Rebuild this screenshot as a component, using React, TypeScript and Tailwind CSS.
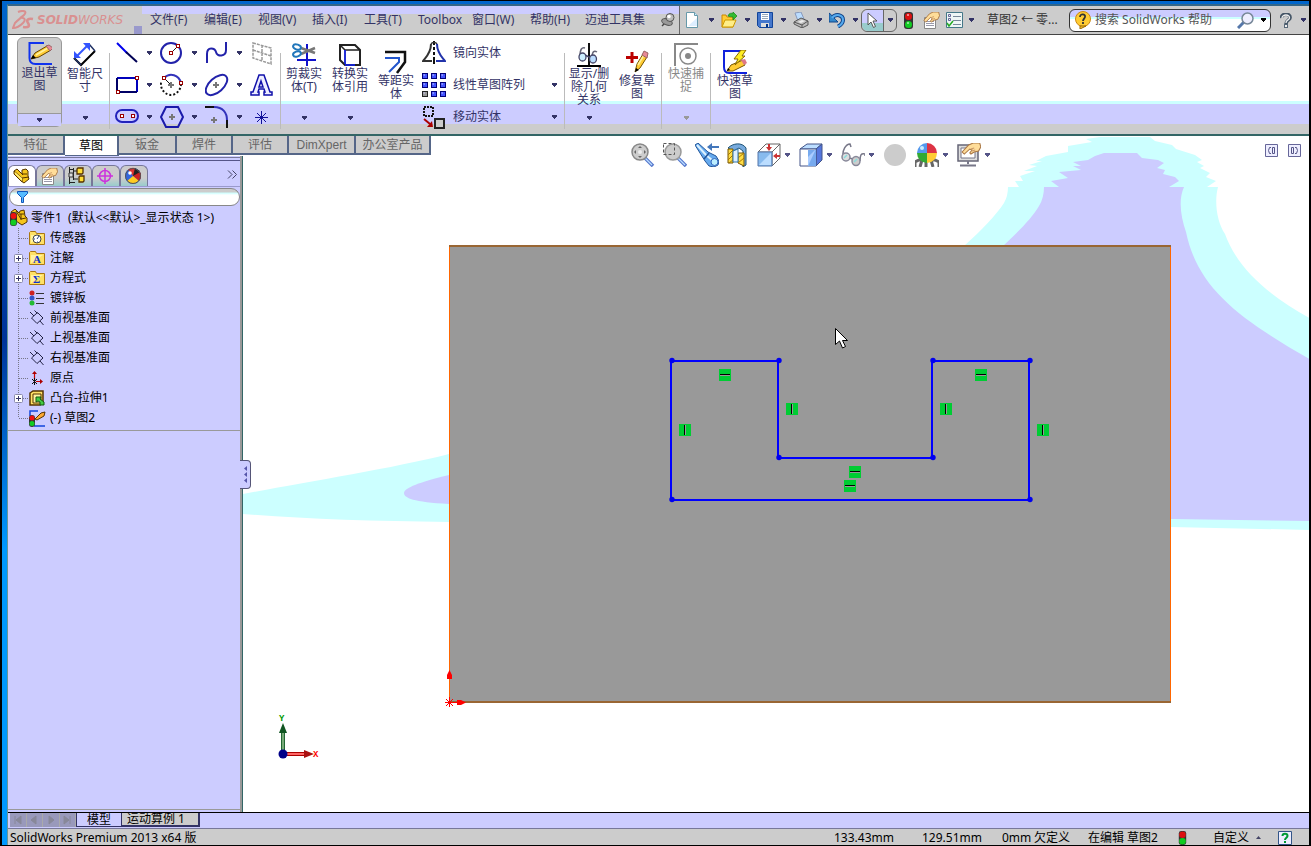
import React from 'react'

type IconProps = { w?: number; h?: number; box?: string; children: React.ReactNode }

function Ic({ w = 24, h = 24, box, children }: IconProps) {
  return (
    <svg width={w} height={h} viewBox={box ?? `0 0 ${w} ${h}`} fill="none" className="shrink-0" aria-hidden="true">
      {children}
    </svg>
  )
}

function Arrow({ color = '#333366' }: { color?: string }) {
  return (
    <Ic w={5} h={4}>
      <path d="M0 0h5v2h-1v1h-1v1h-1v-1h-1v-1h-1z" fill={color} />
    </Ic>
  )
}

/* ---------- shared pieces ---------- */

function Handle({ x, y }: { x: number; y: number }) {
  return <rect x={x + 0.5} y={y + 0.5} width="3" height="3" fill="#fff" stroke="#990000" />
}

function Plus({ x, y }: { x: number; y: number }) {
  return <path d={`M${x - 3} ${y}h6M${x} ${y - 3}v6`} stroke="#777" strokeWidth="2" />
}

function Pencil() {
  return (
    <g>
      <path d="M1 15l4-6L17 2l4 4L9 13z" fill="#ffcc33" stroke="#664400" />
      <path d="M6 11L18 4" stroke="#fff09a" strokeWidth="1.500" />
      <path d="M16 2l3-1 4 3-3 3z" fill="#e88a96" stroke="#996666" />
      <path d="M1 15l2-4 3 3z" fill="#000" />
    </g>
  )
}

function Hand() {
  return (
    <g>
      <path d="M1 9L7 2l4-2h6l1 4-2 4-4 1-3 2-1-1 2-3-2-1-5 5z" fill="#ffdd99" stroke="#aa7744" />
      <path d="M9 6l3-1M10 8l3-1" stroke="#cc9966" />
    </g>
  )
}

function Stoplight() {
  return (
    <Ic w={9} h={17}>
      <rect x="0" y="0" width="9" height="17" rx="3" fill="#333" />
      <circle cx="4.500" cy="4.500" r="3.500" fill="#dd1111" />
      <circle cx="4.500" cy="12.500" r="3.500" fill="#11cc22" />
      <path d="M3 3h2M3 11h2" stroke="#fff" />
    </Ic>
  )
}

/* ---------- title bar icons ---------- */

const NewDoc = () => (
  <Ic w={16} h={16}>
    <path d="M1.500.5h8l3 3v12h-11z" fill="#fff" stroke="#6699aa" />
    <path d="M9.500.5v3h3" fill="#cceeff" stroke="#6699aa" />
    <path d="M3 14L12 6v8z" fill="#ddeeff" />
  </Ic>
)
const OpenDoc = () => (
  <Ic w={16} h={16}>
    <path d="M1 15V3h4l1 2h6v10z" fill="#ffcc33" stroke="#cc8800" />
    <path d="M1 15l3-7h11l-3 7z" fill="#ffee88" stroke="#cc9900" />
    <path d="M7 4c1-3 3-3 5-2.500V0l4 4-4 4V5c-2-.5-3 0-5-1z" fill="#33bb33" stroke="#118811" strokeWidth=".7" />
  </Ic>
)
const SaveDoc = () => (
  <Ic w={16} h={16}>
    <path d="M.5.5h15v15h-13l-2-2z" fill="#4477cc" stroke="#114499" />
    <path d="M4 1h8v7H4z" fill="#fff" />
    <path d="M5 2.500h6M5 4.500h6M5 6.500h6" stroke="#99aabb" />
    <path d="M4 11h8v4H4z" fill="#ddd" />
    <path d="M9 12h2v3H9z" fill="#003388" />
  </Ic>
)
const PrintDoc = () => (
  <Ic w={16} h={16}>
    <path d="M2 1l6-1 3 7-6 2z" fill="#bbddff" stroke="#8899bb" />
    <path d="M1 10l7-4 7 3v4l-6 3-8-4z" fill="#bbb" stroke="#555" />
    <path d="M1 10l8 3 6-4" stroke="#555" />
    <path d="M9 13v3" stroke="#555" />
    <path d="M5 10l4-2 3 1-4 2z" fill="#eee" />
  </Ic>
)
const Undo = () => (
  <Ic w={16} h={16}>
    <path d="M3 6c4-5 11-3 11 2 0 3-2 5-5 6.500" stroke="#114488" strokeWidth="4" />
    <path d="M0 1v9h9L6.500 7.500 2.500 3z" fill="#3388cc" stroke="#114488" />
    <path d="M3 6c4-5 11-3 11 2 0 3-2 5-5 6.500" stroke="#55aaee" strokeWidth="2" />
  </Ic>
)
const Pointer = () => (
  <Ic w={12} h={17}>
    <path d="M1 1v12l3-3 2.500 5.500 2-1L6 9h4z" fill="#fff" stroke="#555" />
  </Ic>
)
const PropsIcon = () => (
  <Ic w={17} h={17}>
    <path d="M1.500 5.500h11v11h-11z" fill="#fff" stroke="#888" />
    <path d="M3 9.500h8M3 11.500h8M3 13.500h8" stroke="#99a" />
    <g transform="translate(0 0) scale(.92)"><Hand /></g>
  </Ic>
)
const ListIcon = () => (
  <Ic w={17} h={16}>
    <path d="M.5.500h16v15h-16z" fill="#eef6f6" stroke="#447788" />
    <path d="M7 4.500h8M7 8.500h8M7 12.500h8" stroke="#778899" />
    <path d="M2.500 2.500h2v2h-2zM2.500 6.500h2v2h-2z" stroke="#666699" />
    <path d="M1 11l2 3 4-5" stroke="#22aa22" strokeWidth="1.500" />
  </Ic>
)
const Pin = () => (
  <Ic w={14} h={14}>
    <path d="M1 13l4-4" stroke="#444" strokeWidth="1.500" />
    <ellipse cx="6" cy="9" rx="5.500" ry="3" transform="rotate(20 6 9)" fill="#999" stroke="#555" />
    <circle cx="9" cy="4.500" r="4" fill="#bbb" stroke="#555" />
    <circle cx="8" cy="3.500" r="1.800" fill="#fff" />
  </Ic>
)

/* ---------- ribbon icons ---------- */

const ExitSketch = () => (
  <Ic>
    <path d="M16 1H1.500v15c0 4 2 6 6 6H24" stroke="#1133ee" strokeWidth="2" />
    <g transform="translate(2 2)"><Pencil /></g>
  </Ic>
)
const SmartDim = () => (
  <Ic>
    <path d="M1 15l7 7L22 8" stroke="#000" strokeWidth="2" />
    <path d="M1 15l7 7M16 1l6 7" stroke="#223366" strokeWidth="1.500" />
    <path d="M4 13L15 2" stroke="#3355ff" strokeWidth="2" />
    <path d="M1 15V8l7 7zM17 0v8L10 0z" fill="#3355ff" />
  </Ic>
)
const LineI = () => <Ic><path d="M2 2l10 10" stroke="#0000ee" strokeWidth="2" /><path d="M11 11l11 10" stroke="#000055" strokeWidth="2" /></Ic>
const CircleI = () => (
  <Ic>
    <circle cx="11" cy="12" r="10" stroke="#2222aa" strokeWidth="2" />
    <path d="M11 12l7-7" stroke="#222" />
    <Handle x={9} y={10} /><Handle x={16} y={3} />
  </Ic>
)
const SplineI = () => <Ic><path d="M2 22V13c0-8 8-6 9-2 1 5 10 5 10-2V1" stroke="#2222aa" strokeWidth="2" /></Ic>
const GridI = () => (
  <Ic>
    <path d="M3 2l18 5v16L3 17zM3 9l18 6M12 4v16" stroke="#999" strokeWidth="1.500" strokeDasharray="3 1" />
  </Ic>
)
const RectI = () => (
  <Ic>
    <path d="M2 5h20v14" stroke="#0000bb" strokeWidth="2" />
    <path d="M2 5v14h20" stroke="#000066" strokeWidth="2" />
    <Handle x={1} y={17} /><Handle x={20} y={3} />
  </Ic>
)
const ArcI = () => (
  <Ic>
    <path d="M4 5c6-6 15-3 17 5" stroke="#3333bb" strokeWidth="2" />
    <path d="M21 11c0 6-5 11-10 11S0 17 1 9" stroke="#111" strokeWidth="2" strokeDasharray="2 2" />
    <path d="M4 5l7 7" stroke="#111" />
    <Plus x={11} y={12} /><Handle x={2} y={3} /><Handle x={19} y={8} />
  </Ic>
)
const EllipseI = () => (
  <Ic>
    <ellipse cx="11.500" cy="12" rx="13" ry="7" transform="rotate(-42 11.500 12)" stroke="#2222aa" strokeWidth="2" />
    <Plus x={11} y={12} />
  </Ic>
)
const TextI = () => (
  <Ic>
    <path d="M9 2h5l6 17h2v3h-8v-3h1l-1-3H9l-1 3h1v3H1v-3h2zM11 8l-2 6h4z" fill="#eef" stroke="#1111aa" strokeWidth="1.500" fillRule="evenodd" />
  </Ic>
)
const SlotI = () => (
  <Ic>
    <rect x="1" y="5" width="22" height="12" rx="6" stroke="#2222bb" strokeWidth="2" />
    <Handle x={5} y={9} /><Handle x={16} y={9} />
  </Ic>
)
const HexI = () => (
  <Ic>
    <path d="M6 2h12l5 10-5 10H6L1 12z" stroke="#1a1aaa" strokeWidth="2" />
    <Plus x={12} y={12} />
  </Ic>
)
const FilletI = () => (
  <Ic>
    <path d="M0 2h9M22 15v8" stroke="#111" strokeWidth="2" />
    <path d="M9 2c9 0 13 6 13 13" stroke="#3333bb" strokeWidth="2" />
    <Plus x={9} y={15} />
  </Ic>
)
const PointI = () => <Ic><path d="M11.500 6v13M5 12.500h13M7 8l9 9M16 8l-9 9" stroke="#111199" /></Ic>

const TrimI = () => (
  <Ic>
    <path d="M15 1v22M5 17h19" stroke="#1111cc" strokeWidth="2" />
    <path d="M9 5l14 5M9 11l14-6" stroke="#777" strokeWidth="2.500" />
    <ellipse cx="5" cy="4" rx="4" ry="2.500" transform="rotate(20 5 4)" stroke="#2277bb" strokeWidth="2" />
    <ellipse cx="5" cy="11" rx="4" ry="2.500" transform="rotate(-20 5 11)" stroke="#2277bb" strokeWidth="2" />
  </Ic>
)
const ConvertI = () => (
  <Ic>
    <path d="M2 2h15l5 5v15H7l-5-5z" fill="#fff" stroke="#222" strokeWidth="2" />
    <path d="M2 2l5 5h15M7 7v15" stroke="#222" strokeWidth="1.500" />
    <path d="M7 21V7M7 22h10" stroke="#1122ff" strokeWidth="1.500" />
  </Ic>
)
const OffsetI = () => (
  <Ic>
    <path d="M1 2h20v10L13 23" stroke="#111" strokeWidth="2.500" />
    <path d="M1 8h14v4L5 22" stroke="#2255cc" strokeWidth="2" />
  </Ic>
)
const MirrorI = () => (
  <Ic>
    <path d="M12 0v4m0 2v3m0 2v3m0 2v7" stroke="#111" strokeWidth="2" />
    <path d="M9 3c0 9-5 13-8 17h9" stroke="#333" strokeWidth="2" />
    <path d="M9 3c1-2 5-2 6 0" stroke="#333" strokeWidth="1.500" />
    <path d="M15 3c0 9 5 13 8 17h-9" stroke="#2233aa" strokeWidth="2" />
  </Ic>
)
const PatternI = () => (
  <Ic>
    {[1, 10, 19].map((y) =>
      [0, 9, 18].map((x) => (
        <g key={`${x}-${y}`}>
          <rect x={x + 0.5} y={y - 0.5} width="5" height="5" fill={x === 0 && y === 19 ? '#999' : '#4455ff'} stroke={x === 0 && y === 19 ? '#222' : '#000077'} />
          <path d={`M${x + 1.5} ${y + 1}h1.500`} stroke="#ccf" />
        </g>
      )),
    )}
  </Ic>
)
const MoveI = () => (
  <Ic>
    <path d="M2 2h9v9H2z" stroke="#111" strokeWidth="2" strokeDasharray="2 1" />
    <path d="M2 14l6 5" stroke="#aa0000" strokeWidth="2" />
    <path d="M11 22H5l5-6z" fill="#aa0000" />
    <path d="M13 14h9v9h-9z" fill="#ccc" stroke="#222" strokeWidth="2" />
  </Ic>
)
const RelationsI = () => (
  <Ic>
    <path d="M12 0v23" stroke="#111" strokeWidth="2" />
    <path d="M0 23h24" stroke="#000" strokeWidth="2" />
    <path d="M3 13C3 6 5 4 8 5M15 14c0-5 2-7 5-5" stroke="#667" strokeWidth="1.500" />
    <path d="M8 12l4 2 3 1" stroke="#446" strokeWidth="1.500" />
    <ellipse cx="5.500" cy="14" rx="3.500" ry="4" fill="#cceeff" stroke="#446" strokeWidth="1.300" />
    <ellipse cx="16" cy="16" rx="3.500" ry="4" fill="#bbddff" stroke="#446" strokeWidth="1.300" />
  </Ic>
)
const RepairI = () => (
  <Ic>
    <path d="M7 2v11M1 7.500h12" stroke="#bb0000" strokeWidth="3" />
    <path d="M10 22l2-8 6-10 4 3-7 11z" fill="#ffcc33" stroke="#775500" />
    <path d="M13 15l6-10" stroke="#fff09a" strokeWidth="1.500" />
    <path d="M17 5l2-4 4 2-1 5z" fill="#e88a96" stroke="#996666" />
    <path d="M10 22l1-4 3 2z" fill="#000" />
  </Ic>
)
const SnapI = () => (
  <Ic>
    <path d="M1 23V1H24" stroke="#888" strokeWidth="2" />
    <circle cx="14" cy="13" r="8" stroke="#888" strokeWidth="1.500" />
    <circle cx="14" cy="13" r="3" fill="#888" />
  </Ic>
)
const RapidI = () => (
  <Ic>
    <path d="M18 1H1v16c0 4 1 6 5 6H24" stroke="#1122dd" strokeWidth="2" />
    <path d="M4 21l4-6 12-5 2 5-12 6z" fill="#ffcc33" stroke="#775500" />
    <path d="M18 10l4-1 2 4-3 2z" fill="#dd7788" />
    <path d="M18 0l5 0-4 6h3L12 15l3-6h-4z" fill="#ffee22" stroke="#886600" />
    <path d="M4 21l1-3 2 2z" fill="#000" />
  </Ic>
)

/* ---------- view toolbar icons ---------- */

const ZoomFit = () => (
  <Ic>
    <path d="M14 15l8 8" stroke="#5577cc" strokeWidth="3.500" /><path d="M14 15l7 7" stroke="#bbddff" strokeWidth="1.200" />
    <circle cx="9" cy="9" r="8" fill="#ccc" stroke="#888" strokeWidth="1.500" />
    <path d="M9 3l2 2H7zM9 15l2-2H7zM3 9l2-2v4zM15 9l-2-2v4z" fill="#666" />
    <circle cx="9" cy="9" r="2" fill="#eee" />
  </Ic>
)
const ZoomArea = () => (
  <Ic>
    <path d="M15 15l8 8" stroke="#5577cc" strokeWidth="3.500" /><path d="M15 15l7 7" stroke="#bbddff" strokeWidth="1.200" />
    <circle cx="10" cy="9" r="8" fill="#ccc" stroke="#999" strokeWidth="1.500" />
    <path d="M.5.500h11v11H.5z" stroke="#555" strokeDasharray="3 2" />
  </Ic>
)
const PrevView = () => (
  <Ic>
    <path d="M0 2l3-2 10 9 8 4 3 5-1 4-4 2-5-1-4-5L5 10z" fill="#66aaee" stroke="#225599" />
    <path d="M2 2l9 10 6 5" stroke="#ddf2ff" strokeWidth="2" />
    <path d="M9 16l5-6" stroke="#225599" strokeWidth="1.500" />
    <circle cx="19.500" cy="19" r="3.500" fill="#bbeeff" stroke="#3366bb" />
    <path d="M15 4h9" stroke="#4477bb" strokeWidth="2" /><path d="M12 4l5-4v8z" fill="#4477bb" />
  </Ic>
)
const SectionI = () => (
  <Ic w={22}>
    <path d="M1 5c5-5 14-6 18 0v17l-3 2V8l-4-3-6 3z" fill="#77aadd" stroke="#225577" />
    <path d="M1 6h5v14H1zM11 10h6v13l-6-3z" fill="#ffdd44" stroke="#775500" />
    <path d="M1 12l5-5M1 17l5-5M2 20l4-3M11 15l6-5M11 20l6-5" stroke="#aa7700" />
    <path d="M6 8l5-2v13H6z" fill="#ddefff" stroke="#3377aa" />
  </Ic>
)
const OrientI = () => (
  <Ic>
    <path d="M1 9l8-8h14l-8 8zM23 1v14l-8 8V9z" fill="#fff" stroke="#666" />
    <path d="M1 9h14v14H1z" fill="#88bbee" stroke="#5577aa" />
    <path d="M2 22L14 10v12z" fill="#bbddff" />
    <path d="M12 1v3M23 13h-3" stroke="#cc3333" strokeWidth="2" /><path d="M9 4h6l-3 4zM20 10v6l-4-3z" fill="#cc3333" />
  </Ic>
)
const DisplayI = () => (
  <Ic>
    <path d="M1 6l7-5h15l-6 5z" fill="#bbddff" stroke="#445588" />
    <path d="M17 6l6-5v16l-6 6z" fill="#5577dd" stroke="#445588" />
    <path d="M1 6h16v17H1z" fill="#fff" stroke="#445588" />
    <path d="M9 7h8v16H9z" fill="#77aaee" /><path d="M9 23V14l8-8z" fill="#aaccff" />
  </Ic>
)
const GlassesI = () => (
  <Ic>
    <path d="M2 14C1 7 5 1 9 1l1 3M19 18c0-6 1-8 5-7v2M8 15l4 1" stroke="#777788" strokeWidth="1.500" />
    <ellipse cx="5" cy="14" rx="4" ry="4" fill="#ddd" stroke="#889" strokeWidth="1.500" />
    <ellipse cx="15" cy="18" rx="4" ry="4.500" fill="#ccc" stroke="#889" strokeWidth="1.500" />
    <path d="M3 15l3-3M13 19l3-3" stroke="#88dddd" strokeWidth="1.500" />
  </Ic>
)
const BallI = () => <Ic><circle cx="12" cy="12" r="11" fill="#ccc" /></Ic>
const SceneI = () => (
  <Ic>
    <path d="M0 24v-5l4-2h16l4 2v5M5 24l2-7M11 24v-7M18 24l-2-7" stroke="#666" strokeWidth="3" />
    <path d="M12 10V0a10 10 0 0 0-10 10z" fill="#5599ee" />
    <path d="M12 10V0a10 10 0 0 1 10 10z" fill="#dd3344" />
    <path d="M12 10v10A10 10 0 0 1 2 10z" fill="#33aa33" />
    <path d="M12 10v10a10 10 0 0 0 10-10z" fill="#ffcc33" />
    <circle cx="7" cy="5" r="2" fill="#cceeff" />
  </Ic>
)
const SettingsI = () => (
  <Ic>
    <path d="M1 2h20v16H1z" fill="#ddd" stroke="#667" strokeWidth="1.500" />
    <path d="M4 5h14v10H4z" fill="#fff" stroke="#778" />
    <path d="M11 18v3M3 22.500h16" stroke="#778" strokeWidth="2" />
    <g transform="translate(4 0) scale(1.100 1)"><Hand /></g>
  </Ic>
)

/* ---------- tree icons ---------- */

const PartI = () => (
  <Ic w={17} h={17}>
    <path d="M1 3l3-2 5 5 0-4 4-1 2 2v5l1 3-5 4-3-2L1 6z" fill="#f5c51c" stroke="#553300" />
    <path d="M1 3l8 7 7-1M9 10v4M9 6h5M4 1l6 6" stroke="#553300" />
    <path d="M2 4l7 6v3L2 6z" fill="#ffee77" />
  </Ic>
)
const RootI = () => (
  <Ic w={18} h={18}>
    <path d="M1 3l4-3 4 4 1-2 4-1 1 6 2 2v4l-5 3-6-4z" fill="#f5c51c" stroke="#553300" />
    <path d="M6 2l5 8 5-1M11 5v6M9 5h5" stroke="#553300" />
    <rect x="0" y="3" width="7" height="14" rx="3" fill="#333" />
    <circle cx="3.500" cy="7" r="3" fill="#ee1111" /><circle cx="3.500" cy="13.500" r="3" fill="#11cc22" />
  </Ic>
)
function Folder({ children }: { children: React.ReactNode }) {
  return (
    <Ic w={16} h={16}>
      <path d="M.5 14.500V2.500l1-1h5l1 2h8v11z" fill="#ffe066" stroke="#aa7711" />
      <path d="M2 13V5h12z" fill="#fff3a0" />
      {children}
    </Ic>
  )
}
const SensorI = () => (
  <Folder><circle cx="8" cy="9" r="4" fill="#fff" stroke="#444" /><path d="M8 9l2-3M5 9h1M8 12h1" stroke="#224488" /></Folder>
)
const AnnoI = () => <Folder><text x="4" y="13" fontSize="11" fontWeight="bold" fontFamily="Liberation Serif, serif" fill="#1133cc">A</text></Folder>
const EquI = () => <Folder><text x="4" y="13" fontSize="11" fontWeight="bold" fontFamily="Liberation Serif, serif" fill="#1133cc">Σ</text></Folder>
const MaterialI = () => (
  <Ic w={16} h={16}>
    <circle cx="3" cy="3" r="2.500" fill="#cc2222" /><circle cx="3" cy="8" r="2.500" fill="#3355cc" /><circle cx="3" cy="13" r="2.500" fill="#22bb33" />
    <path d="M7 3.500h8M7 8.500h8M7 13.500h8" stroke="#333" />
  </Ic>
)
const PlaneI = () => (
  <Ic w={16} h={16}>
    <path d="M8 2.500L14 8.500 8 13.500 2.500 8.500zM1 1l4 4M11 11l4 4M0 8l3-3 7-5M0 5.500l1 1" stroke="none" />
    <path d="M8.500 2.500L14 8 8 13.500 2.500 8zM1 2l4 4M11 11l3.500 4M5.500.5l3 3" stroke="#222244" />
  </Ic>
)
const OriginI = () => (
  <Ic w={16} h={16}>
    <path d="M5.500 12V2M7 11.500h6" stroke="#cc0000" strokeWidth="1.200" />
    <path d="M3 4l2.500-3L8 4zM11 9l3 2.500-3 2.500z" fill="#aa0000" />
    <path d="M3 9l5 5M8 9l-5 5M5.500 8v7" stroke="#111" />
  </Ic>
)
const ExtrudeI = () => (
  <Ic w={16} h={16}>
    <path d="M1 3l3-2h10v11l-3 3H1z" fill="#ffe066" stroke="#553300" strokeWidth="1.500" />
    <path d="M4 4h8v9H4z" fill="#fff3a0" stroke="#553300" />
    <path d="M7 7h5l-1 2 4 3v3h-4v-3l-2-1-2 1z" fill="#44cc44" stroke="#115511" />
  </Ic>
)
const SketchI = () => (
  <Ic w={17} h={17}>
    <path d="M9 1H1v5M5 16h11" stroke="#1144dd" strokeWidth="1.500" />
    <path d="M6 9l6-6 4-1-1 4-7 4z" fill="#ffaa33" stroke="#553300" />
    <rect x="0" y="5" width="6" height="12" rx="3" fill="#333" />
    <circle cx="3" cy="8" r="2.500" fill="#ee1111" /><circle cx="3" cy="13.500" r="2.500" fill="#11cc22" />
  </Ic>
)
const ConfigI = () => (
  <Ic w={18} h={18}>
    <path d="M1.500 0v17M1 2.500h4M1 15.500h6M5.500 1v12M6 4h4M6 12h4" stroke="#222" />
    <path d="M9 2l1-1h5v5l-1 1H9zM11 10l1-1h4v5l-1 1h-4z" fill="#ffdd33" stroke="#553300" strokeWidth="1.300" />
    <path d="M1 6h4v4H1z" fill="#ddd" stroke="#333" />
  </Ic>
)
const DimXI = () => (
  <Ic w={18} h={18}>
    <circle cx="9" cy="9" r="5.500" stroke="#cc33dd" strokeWidth="1.500" />
    <path d="M9 1v16M1 9h16" stroke="#cc33dd" strokeWidth="1.500" />
  </Ic>
)
const AppearI = () => (
  <Ic w={18} h={18}>
    <circle cx="9" cy="9" r="8" fill="#3366dd" />
    <path d="M9 9V1a8 8 0 0 1 8 8z" fill="#222" /><path d="M9 9L4 2.500A8 8 0 0 1 11 1z" fill="#dd3333" />
    <path d="M9 9l7-4a8 8 0 0 1-1 9z" fill="#cc2222" /><path d="M9 9l6 5a8 8 0 0 1-12 0z" fill="#ffcc22" />
    <circle cx="6" cy="6" r="1.800" fill="#fff" />
    <circle cx="9" cy="9" r="7.500" stroke="#555" />
  </Ic>
)

/* ---------- title bar ---------- */

const menus: [string, string][] = [
  ['文件(F)', 'w-[54px]'], ['编辑(E)', 'w-[54px]'], ['视图(V)', 'w-[54px]'], ['插入(I)', 'w-[52px]'], ['工具(T)', 'w-[54px]'],
  ['Toolbox', 'w-[54px]'], ['窗口(W)', 'w-[58px]'], ['帮助(H)', 'w-[55px]'], ['迈迪工具集', 'w-[76px]'],
]

const quick: [string, () => React.ReactElement][] = [
  ['新建', NewDoc], ['打开', OpenDoc], ['保存', SaveDoc], ['打印', PrintDoc], ['撤消', Undo],
]

function TitleBar() {
  return (
    <header className="flex h-[29px] shrink-0 items-stretch border-b border-[#444] bg-[#ccc]">
      <div className="flex w-[134px] shrink-0 items-center gap-[3px] pl-1 text-[#d99090]">
        <Ic w={22} h={20}>
          <path d="M6 2c5-2 10-1 6 3L8 8c5-1 6 2 3 5s-6 5-10 5l2-5c4-4 6-5 9-8" stroke="currentColor" strokeWidth="2" />
          <path d="M21 9c-5-1-7 1-5 4s1 5-5 4" stroke="currentColor" strokeWidth="2.500" />
        </Ic>
        <span className="flex-1 whitespace-nowrap text-[12px] italic [font-family:'DejaVu_Sans',sans-serif]">
          <b>SOLID</b>WORKS
        </span>
        <i className="h-2 w-2 self-end bg-[#9999cc]" />
      </div>
      <nav className="flex shrink-0 items-center border-r border-[#666] bg-[linear-gradient(#ccccff_8px,#cccccc_8px)] pl-2">
        {menus.map(([label, width]) => (
          <button key={label} className={`${width} whitespace-nowrap text-left text-[#333366]`}>{label}</button>
        ))}
        <button aria-label="固定菜单" className="w-[18px]"><Pin /></button>
      </nav>
      <div className="flex min-w-0 flex-1 items-center pl-[5px]">
        {quick.map(([label, Icon]) => (
          <button key={label} aria-label={label} className={`flex shrink-0 items-center gap-2 ${label === '撤消' ? 'w-8' : 'w-9'}`}><Icon /><Arrow /></button>
        ))}
        <button aria-label="选择" className="mr-[7px] flex h-[23px] w-9 shrink-0 items-center rounded-md border border-[#666] bg-[#ccc]">
          <span className="flex h-full w-[22px] items-center justify-center rounded-l-md border-r border-[#666] bg-[linear-gradient(#ccccff_60%,#99cccc_60%)]"><Pointer /></span>
          <span className="flex flex-1 justify-center"><Arrow /></span>
        </button>
        <button aria-label="重建模型" className="mr-[10px]"><Stoplight /></button>
        <button aria-label="文件属性" className="mr-[6px]"><PropsIcon /></button>
        <button aria-label="选项" className="flex shrink-0 items-center gap-[6px]"><ListIcon /><Arrow /></button>
        <span className="ml-[13px] w-[82px] shrink-0 whitespace-nowrap text-[#333]">草图2 ← 零...</span>
        <label className="flex h-[23px] w-[202px] shrink-0 items-center rounded-md border border-[#333] bg-[linear-gradient(#ccccff_7px,#ccffff_7px,#ccffff_9px,#ffffff_9px)] pl-1 pr-1">
          <Ic w={18} h={18}>
            <circle cx="9" cy="8" r="7.500" fill="#ffcc33" stroke="#cc8811" />
            <path d="M6 15l0 3 6-3z" fill="#ffcc33" stroke="#996600" />
            <path d="M6 6c0-4 6-3 5 0 0 1-2 2-2 4M9 11v2" stroke="#333" strokeWidth="1.800" />
          </Ic>
          <input aria-label="搜索 SolidWorks 帮助" placeholder="搜索 SolidWorks 帮助" className="ml-[3px] min-w-0 flex-1 bg-transparent outline-none placeholder:text-[#555]" />
          <Ic w={17} h={17}>
            <path d="M1 16l6-6" stroke="#5577aa" strokeWidth="3" />
            <circle cx="10.500" cy="6.500" r="5.500" fill="#eef" stroke="#778899" strokeWidth="1.500" />
          </Ic>
          <span className="ml-[7px]"><Arrow color="#000" /></span>
        </label>
        <button aria-label="帮助" className="ml-[9px] flex shrink-0 items-center gap-[9px]">
          <Ic w={12} h={15}>
            <path d="M1.500 5C1 0 11 0 10 5c0 2-4 2-4 6" stroke="#445566" strokeWidth="3.500" />
            <path d="M2 5C2 1 10 1 9.500 5c0 2-4 2-3.500 5" stroke="#eee" strokeWidth="1.300" />
            <rect x="4.500" y="11.500" width="3" height="3" fill="#eee" stroke="#556677" />
          </Ic>
          <Arrow />
        </button>
      </div>
    </header>
  )
}

/* ---------- ribbon ---------- */

type BigProps = { icon: React.ReactNode; label: string; wide?: boolean; low?: boolean; drop?: boolean; off?: boolean }

function Big({ icon, label, wide, low, drop, off }: BigProps) {
  return (
    <button className={`flex h-[91px] shrink-0 flex-col items-center leading-[13px] ${wide ? 'w-12' : 'w-[46px]'} ${low ? 'pt-[13px]' : 'pt-[6px]'} ${off ? 'text-[#888]' : 'text-[#333366]'}`}>
      {icon}
      <span className="w-11 px-px text-center">{label}</span>
      {drop && <span className="mt-auto pb-2"><Arrow color={off ? '#999999' : '#333366'} /></span>}
    </button>
  )
}

const Sep = () => <div className="mt-4 h-[76px] w-px shrink-0 bg-[#bbb]" />

const tools: [string, () => React.ReactElement, boolean][] = [
  ['直线', LineI, true], ['圆', CircleI, true], ['样条曲线', SplineI, true], ['基准面', GridI, false],
  ['边角矩形', RectI, true], ['圆弧', ArcI, true], ['椭圆', EllipseI, true], ['文字', TextI, false],
  ['直槽口', SlotI, true], ['多边形', HexI, true], ['绘制圆角', FilletI, true], ['点', PointI, false],
]

const rows: [string, () => React.ReactElement, boolean][] = [
  ['镜向实体', MirrorI, false], ['线性草图阵列', PatternI, true], ['移动实体', MoveI, true],
]

function Ribbon() {
  return (
    <section className="flex h-[101px] shrink-0 border-b-2 border-[#336666] bg-[linear-gradient(#ffffff_66px,#ccffff_66px,#ccffff_69px,#ccccff_69px,#ccccff_89px,#cccccc_89px)] pl-[9px] pt-[2px]">
      <button className="flex h-[90px] w-[45px] shrink-0 flex-col items-center rounded-md border border-[#999] bg-[#ccc] pt-1 leading-[13px] text-[#333366]">
        <ExitSketch />
        <span className="w-[41px] text-center">退出草图</span>
        <span className="mt-auto flex h-[13px] w-full items-center justify-center border-t border-[#999] bg-[#ccccff]"><Arrow /></span>
      </button>
      <Big icon={<SmartDim />} label="智能尺寸" drop />
      <div className="w-px shrink-0" />
      <Sep />
      <div className="grid h-24 w-[170px] shrink-0 grid-cols-[45px_45px_45px_30px] grid-rows-3 pl-1">
        {tools.map(([label, Icon, drop]) => (
          <button key={label} aria-label={label} className="flex items-center gap-2 pl-[1px]">
            <Icon />
            {drop && <Arrow />}
          </button>
        ))}
      </div>
      <Sep />
      <Big icon={<TrimI />} label="剪裁实体(T)" drop />
      <Big icon={<ConvertI />} label="转换实体引用" drop />
      <Big icon={<OffsetI />} label="等距实体" low />
      <div className="grid h-24 w-[145px] shrink-0 grid-rows-3 pl-[3px] pr-[7px]">
        {rows.map(([label, Icon, drop]) => (
          <button key={label} className="flex items-center gap-[7px] text-[#333366]">
            <Icon />
            <span className="flex-1 whitespace-nowrap text-left">{label}</span>
            {drop && <Arrow />}
          </button>
        ))}
      </div>
      <Sep />
      <Big icon={<RelationsI />} label="显示/删除几何关系" wide drop />
      <Big icon={<RepairI />} label="修复草图" wide low />
      <Sep />
      <Big icon={<SnapI />} label="快速捕捉" wide drop off />
      <Sep />
      <Big icon={<RapidI />} label="快速草图" wide low />
    </section>
  )
}

/* ---------- command tabs ---------- */

const tabs: [string, string][] = [
  ['特征', 'w-[57px]'], ['草图', 'w-[54px]'], ['钣金', 'w-[58px]'], ['焊件', 'w-[56px]'],
  ['评估', 'w-[56px]'], ['DimXpert', 'w-[67px]'], ['办公室产品', 'w-[75px]'],
]

function CommandTabs() {
  return (
    <div role="tablist" className="relative flex h-5 shrink-0 items-start">
      {tabs.map(([label, width]) => (
        <button
          key={label}
          role="tab"
          aria-selected={label === '草图'}
          className={`${width} whitespace-nowrap border-r-2 border-[#556688] text-center leading-[18px] ${
            label === '草图' ? 'h-5 border-b bg-white text-black' : 'h-[19px] border-b-2 bg-[#ccc] text-[#666]'
          } ${label === 'DimXpert' ? "[font-family:'Liberation_Sans',sans-serif]" : ''}`}
        >
          {label}
        </button>
      ))}
    </div>
  )
}

/* ---------- feature tree ---------- */

const tree: [string, () => React.ReactElement, boolean][] = [
  ['传感器', SensorI, false], ['注解', AnnoI, true], ['方程式', EquI, true], ['镀锌板', MaterialI, false],
  ['前视基准面', PlaneI, false], ['上视基准面', PlaneI, false], ['右视基准面', PlaneI, false],
  ['原点', OriginI, false], ['凸台-拉伸1', ExtrudeI, true], ['(-) 草图2', SketchI, false],
]

const panelTabs: [string, () => React.ReactElement][] = [
  ['特征树', PartI], ['属性', PropsIcon], ['配置', ConfigI], ['尺寸专家', DimXI], ['外观', AppearI],
]

function TreePanel() {
  return (
    <aside className="relative flex w-[235px] shrink-0 flex-col border-r border-[#336666] bg-[#ccccff]">
      <div className="flex min-h-0 flex-1 flex-col border-r-2 border-[#999999]">
        <div className="h-[5px] shrink-0 border-b border-[#555588] bg-[#ccccff] pt-[1px]"><div className="h-px bg-[#777799]" /></div>
        <div className="flex h-[26px] items-end border-b border-[#9999cc]">
          {panelTabs.map(([label, Icon], i) => (
            <button key={label} aria-label={label} className={`flex h-[21px] w-7 items-center justify-center rounded-t-md border border-b-0 border-[#777799] pr-[2px] ${i === 0 ? 'bg-white' : 'bg-[linear-gradient(#cccccc_60%,#99cccc)]'}`}>
              <Icon />
            </button>
          ))}
          <button aria-label="展开" className="ml-auto pb-[7px] pr-[3px]">
            <Ic w={10} h={9}><path d="M1 .5l4 4-4 4M5.500.5l4 4-4 4" stroke="#444466" /></Ic>
          </button>
        </div>
        <label className="ml-[1px] mt-[1px] flex h-[18px] items-center rounded-full border border-[#888] bg-[linear-gradient(#cccccc_3px,#ccffff_4px,#ffffff_6px)] pl-[7px]">
          <Ic w={11} h={12}><path d="M.5.500h10v2l-4 4v5h-2v-5l-4-4z" fill="#55bbff" stroke="#1155bb" /></Ic>
          <input aria-label="过滤" className="min-w-0 flex-1 bg-transparent outline-none" />
        </label>
        <div className="border-b border-[#999999] pb-[2px]">
          <div className="mt-[2px] flex h-5 items-center gap-[3px] whitespace-nowrap pl-[2px] text-black"><RootI /><span className="whitespace-pre">零件1  (默认&lt;&lt;默认&gt;_显示状态 1&gt;)</span></div>
          <ul>
            {tree.map(([label, Icon, plus], i) => (
              <li key={label} className="flex h-5 items-center pl-[5px] text-black">
                <Ic w={16} h={20}>
                  <path d={i === tree.length - 1 ? 'M5.500 0v10' : 'M5.500 0v20'} stroke="#777788" strokeDasharray="1 1" />
                  <path d="M6 10.500h10" stroke="#777788" strokeDasharray="1 1" />
                  {plus && <><rect x="1.500" y="6.500" width="8" height="8" rx="1" fill="#fff" stroke="#8888aa" /><path d="M3 10.500h5M5.500 8v5" stroke="#333366" /></>}
                </Ic>
                <span className="flex w-[21px]"><Icon /></span>
                <span>{label}</span>
              </li>
            ))}
          </ul>
        </div>
        <div className="mb-[2px] mt-auto h-px bg-[#999999]" />
      </div>
      <button aria-label="收起面板" className="absolute -right-[9px] top-[304px] flex h-[29px] w-[11px] flex-col items-center justify-around rounded-r border border-l-0 border-[#555577] bg-[#ccccff] py-1">
        {[0, 1, 2].map((n) => <Ic key={n} w={3} h={5}><path d="M3 0v5L0 2.500z" fill="#5555aa" /></Ic>)}
      </button>
    </aside>
  )
}

/* ---------- canvas ---------- */

const marks: [number, number, 'h' | 'v'][] = [
  [719, 369, 'h'], [975, 369, 'h'], [786, 403, 'v'], [940, 403, 'v'],
  [679, 424, 'v'], [1037, 424, 'v'], [849, 466, 'h'], [844, 480, 'h'],
]

const nodes = [[672, 361], [779, 361], [933, 361], [1030, 361], [779, 458], [933, 458], [672, 500], [1030, 500]]

function Scene() {
  return (
    <svg className="absolute inset-0 h-full w-full" aria-label="草图视图">
      <g transform="translate(-8 -136)" fill="none">
        <path d="M964 246C982 230 996 215 1004 203Q1008 196 1008 187H1019L1015 181H1023L1020 176 1035 171 1024 171 1037 166 1029 165 1042 161 1036 161 1046 156 1068 152V146L1092 142 1086 139 1100 137H1150L1155 141 1172 145 1176 149 1195 155 1202 160 1197 162 1204 166 1200 168 1210 173 1206 177 1216 181 1207 187H1218C1214 202 1217 222 1225 234C1238 270 1270 296 1311 319V530L1171 527V246z" fill="#ccffff" />
        <path d="M1003 246C1020 230 1032 218 1039 206Q1044 198 1044 187H1059L1051 181 1068 178 1059 172 1081 170 1073 166H1081L1073 162 1088 160 1095 156 1104 153H1137L1142 158 1158 160 1164 163 1157 168 1165 170 1163 174 1175 177 1179 181 1169 187H1184C1178 200 1181 218 1186 232C1198 290 1242 320 1311 360V521L1171 519V246z" fill="#ccccff" />
        <path d="M243 494C300 483 390 469 449 454V522Q330 521 243 514z" fill="#ccffff" />
        <path d="M449 475C420 482 404 488 404 493S413 502 449 504z" fill="#ccccff" />
        <path d="M449 246h722v457H449z" fill="#999999" />
        <path d="M449.500 703V246M1170.500 703V246" stroke="#ff6600" />
        <path d="M449 246h722M449 702h722" stroke="#996633" strokeWidth="2" />
        <path d="M671 361H778V458H932V361H1029V500H671z" stroke="#0000ff" strokeWidth="2" />
        {nodes.map(([x, y]) => <circle key={`${x}-${y}`} cx={x} cy={y - 0.5} r="2.700" fill="#0000ee" />)}
        {marks.map(([x, y, d]) => (
          <g key={`${x}-${y}`}>
            <rect x={x} y={y} width="12" height="12" fill="#00cc33" />
            {d === 'h' ? (
              <><path d={`M${x + 1} ${y + 5.5}h10`} stroke="#000" /><path d={`M${x + 1} ${y + 6.5}h10`} stroke="#999" /></>
            ) : (
              <><path d={`M${x + 5.5} ${y + 1}v10`} stroke="#000" /><path d={`M${x + 6.5} ${y + 1}v10`} stroke="#999" /></>
            )}
          </g>
        ))}
        <path d="M835.500 328.500v16l4-3.500 3 7 3-1.500-3-6h5z" fill="#fff" stroke="#000" />
        <path d="M446 699l7 7M453 699l-7 7M445 702.500h12M449.500 697v10" stroke="#ff0000" />
        <path d="M447 679v-4l2.500-5 2.500 5v4zM457 700v5h4l5-2.500-5-2.500z" fill="#ff0000" />
        <path d="M283 751v-20" stroke="#226633" strokeWidth="4" /><path d="M283 751v-20" stroke="#77aa77" strokeWidth="2" />
        <path d="M279 733l4-10 4 10z" fill="#115522" />
        <path d="M286 754h20" stroke="#aa0000" strokeWidth="4" /><path d="M286 754h20" stroke="#ff6666" strokeWidth="2" />
        <path d="M304 750l10 4-10 4z" fill="#aa1111" />
        <circle cx="283" cy="754" r="4.500" fill="#000088" />
        <text x="279" y="721" fontSize="9" fontWeight="bold" fontFamily="Liberation Mono, monospace" fill="#009900">Y</text>
        <text x="313" y="757" fontSize="9" fontWeight="bold" fontFamily="Liberation Mono, monospace" fill="#ff0000">X</text>
      </g>
    </svg>
  )
}

const views: [string, () => React.ReactElement, string, boolean][] = [
  ['整屏显示全图', ZoomFit, 'w-8', false], ['局部放大', ZoomArea, 'w-8', false], ['上一视图', PrevView, 'w-8', false], ['剖面视图', SectionI, 'w-[30px]', false],
  ['视图定向', OrientI, 'w-[42px]', true], ['显示样式', DisplayI, 'w-[42px]', true], ['隐藏显示项目', GlassesI, 'w-[42px]', true],
  ['编辑外观', BallI, 'w-8', false], ['应用布景', SceneI, 'w-[42px]', true], ['视图设定', SettingsI, 'w-[42px]', true],
]

function ViewTools() {
  return (
    <div className="absolute left-[623px] top-[7px] flex">
      {views.map(([label, Icon, width, drop]) => (
        <button key={label} aria-label={label} className={`${width} flex shrink-0 items-center gap-1`}>
          <Icon />
          {drop && <Arrow color="#555588" />}
        </button>
      ))}
    </div>
  )
}

function Corner() {
  return (
    <div className="absolute right-2 top-2 flex gap-[10px]">
      <button aria-label="左侧面板">
        <Ic w={13} h={13}><path d="M.5.500h12v12H.5z" fill="#eef" stroke="#666699" /><path d="M6 3.500H4.500L3.500 6.500l1 3H6M7.500 3.500h2v6h-2z" stroke="#555588" /></Ic>
      </button>
      <button aria-label="右侧面板">
        <Ic w={13} h={13}><path d="M.5.500h12v12H.5z" fill="#eef" stroke="#666699" /><path d="M7 3.500h1.500l1 3-1 3H7M3.500 3.500h2v6h-2z" stroke="#555588" /></Ic>
      </button>
    </div>
  )
}

/* ---------- bottom bars ---------- */

function ModelTabs() {
  const nav = ['M3 2v8M9 2v8L4 6z', 'M8 2v8L3 6z', 'M4 2v8l5-4z', 'M9 2v8M3 2v8l5-4z']
  return (
    <div className="flex h-4 shrink-0 border-t border-black bg-[#ccccff] pl-[2px]">
      <div className="flex w-[66px] shrink-0">
        {nav.map((d, i) => (
          <button key={d} aria-label={`第${i + 1}个导航`} className="flex h-[14px] flex-1 items-center justify-center border-r border-[#aaaaaa] bg-[#9999bb]">
            <Ic w={12} h={12}><path d={d} fill="#888899" stroke="#888899" /></Ic>
          </button>
        ))}
      </div>
      <button className="h-[14px] w-[46px] border-b border-l border-r border-[#333366] bg-[#ccccff] leading-[12px] text-black">模型</button>
      <button className="h-[14px] w-[78px] whitespace-nowrap border-b-2 border-r-2 border-[#333366] bg-[#ccc] pr-2 leading-[12px] text-black">运动算例 1</button>
    </div>
  )
}

function StatusBar() {
  return (
    <footer className="flex h-[17px] shrink-0 items-center whitespace-nowrap border-t border-[#777799] bg-[#ccc] pl-[2px] pr-[17px] pt-px text-black">
      <span className="flex-1">SolidWorks Premium 2013 x64 版</span>
      <span className="w-[88px]">133.43mm</span>
      <span className="w-20">129.51mm</span>
      <span className="w-8 overflow-hidden">0mm</span>
      <span className="w-[54px]">欠定义</span>
      <span className="w-[90px]">在编辑 草图2</span>
      <span className="w-[35px]"><Ic w={9} h={14} box="0 0 9 17"><rect width="9" height="17" rx="3" fill="#333" /><circle cx="4.500" cy="4.500" r="4" fill="#dd1111" /><circle cx="4.500" cy="12.500" r="4" fill="#11cc22" /></Ic></span>
      <button className="flex w-[65px] items-center gap-[7px]">自定义<Ic w={5} h={3}><path d="M0 3h5L2.500 0z" fill="#444466" /></Ic></button>
      <button aria-label="快速提示">
        <Ic w={14} h={14}><path d="M.5.500h13v13H.5z" fill="#eef" stroke="#335588" /><path d="M4.500 5c0-3 5-3 5 0 0 1.500-2.500 2-2.500 4M7 10v2" stroke="#009933" strokeWidth="2" /></Ic>
      </button>
    </footer>
  )
}

export default function App() {
  return (
    <div className="flex h-screen flex-col bg-black py-px pl-[2px] pr-[2px] text-[12px] leading-4 [font-family:'Noto_Sans','Noto_Sans_CJK_SC',sans-serif]">
      <div className="flex min-h-0 flex-1 flex-col bg-[linear-gradient(#0066cc,#003399_40%,#0099ff_65%)] pl-[5px] pt-[3px]">
        <div className="flex min-h-0 flex-1 flex-col border-l border-t-2 border-l-[#669999] border-t-[#336688] bg-white">
          <TitleBar />
          <Ribbon />
          <main className="relative flex min-h-0 flex-1 flex-col">
            <Scene />
            <CommandTabs />
            <div className="flex min-h-0 flex-1"><TreePanel /></div>
            <ViewTools />
            <Corner />
          </main>
          <ModelTabs />
          <StatusBar />
        </div>
      </div>
    </div>
  )
}
